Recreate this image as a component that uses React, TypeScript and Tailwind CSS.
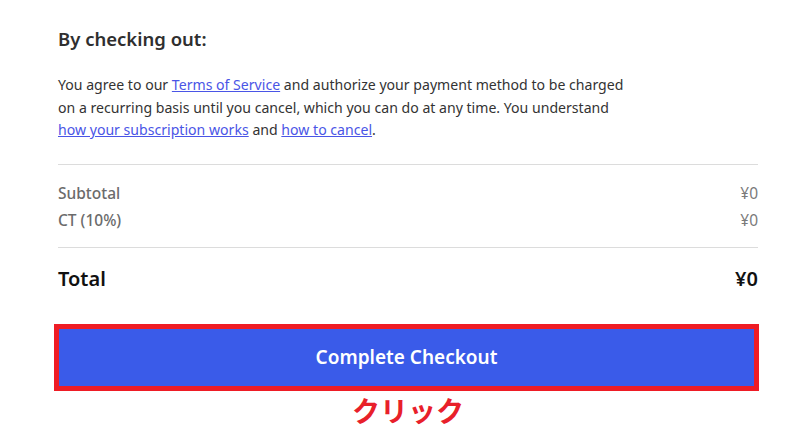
export default function App() {
  return (
    <div
      className="min-h-screen w-full bg-white"
      style={{ fontFamily: '"Segoe UI", "Noto Sans", "Noto Sans CJK JP", sans-serif' }}
    >
      <div className="ml-[58px] w-[700px] pt-[25px]">
        <h2 className="text-[18.5px] font-semibold leading-[28px] text-[#2f2f2f]">By checking out:</h2>

        <p className="mt-[21px] text-[14.1px] leading-[22.5px] text-[#333333]">
          You agree to our{" "}
          <a href="#" className="text-[#4a55e6] underline">
            Terms of Service
          </a>{" "}
          and authorize your payment method to be charged
          <br />
          on a recurring basis until you cancel, which you can do at any time. You understand
          <br />
          <a href="#" className="text-[#4a55e6] underline">
            how your subscription works
          </a>{" "}
          and{" "}
          <a href="#" className="text-[#4a55e6] underline">
            how to cancel
          </a>
          .
        </p>

        <div className="mt-[22px] border-t border-[#dcdcdc] pt-[15px] pb-[13px]">
          <div className="flex justify-between text-[15.5px] leading-[27px]">
            <span className="font-medium text-[#6b6b6b]">Subtotal</span>
            <span className="text-[#7a7a7a]">¥0</span>
          </div>
          <div className="flex justify-between text-[15.5px] leading-[27px]">
            <span className="font-medium text-[#6b6b6b]">CT (10%)</span>
            <span className="text-[#7a7a7a]">¥0</span>
          </div>
        </div>

        <div className="flex justify-between border-t border-[#dcdcdc] pt-[16px] text-[20px] font-semibold leading-[30px] text-[#111111]">
          <span>Total</span>
          <span>¥0</span>
        </div>

        <div className="ml-[-4px] mt-[30px] w-[705px] border-[5px] border-[#ee1c25]">
          <button
            type="button"
            className="flex h-[57px] w-full items-center justify-center bg-[#3a5be9] text-[19px] font-semibold text-white"
          >
            Complete Checkout
          </button>
        </div>

        <p className="mt-[2px] text-center text-[28px] font-bold leading-[36px] text-[#e8202a]">クリック</p>
      </div>
    </div>
  );
}
